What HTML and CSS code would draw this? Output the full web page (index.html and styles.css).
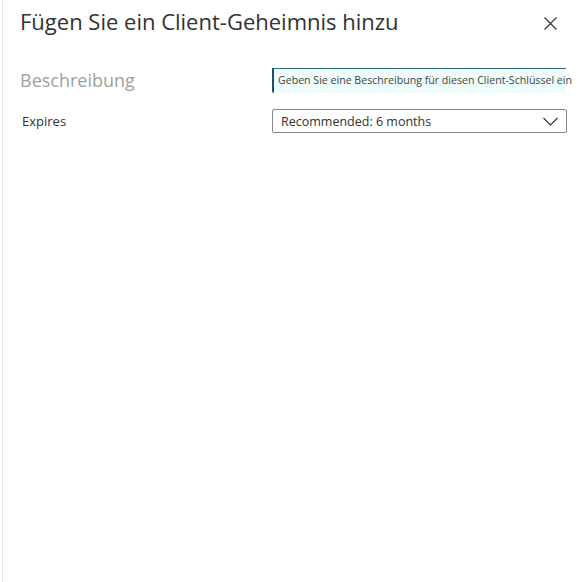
FILE: index.html
```html
<!DOCTYPE html>
<html lang="de">
<head>
<meta charset="utf-8">
<link rel="stylesheet" href="styles.css">
</head>
<body>
<div class="panel">
  <header class="head">
    <h1 class="title">Fügen Sie ein Client-Geheimnis hinzu</h1>
    <button class="close" aria-label="Schließen">
      <svg width="13" height="13" viewBox="0 0 13 13"><path d="M0.5 0.5 L12.5 12.5 M12.5 0.5 L0.5 12.5" stroke="#323130" stroke-width="1.1" fill="none"/></svg>
    </button>
  </header>
  <div class="form">
    <div class="row">
      <label class="label-big">Beschreibung</label>
      <div class="input">Geben Sie eine Beschreibung für diesen Client-Schlüssel ein</div>
    </div>
    <div class="row">
      <label class="label">Expires</label>
      <div class="select">
        <span>Recommended: 6 months</span>
        <svg width="15" height="9" viewBox="0 0 15 9"><path d="M0.5 1 L7.5 8 L14.5 1" stroke="#323130" stroke-width="1.1" fill="none"/></svg>
      </div>
    </div>
  </div>
</div>
</body>
</html>
```
FILE: styles.css
```css
html, body {
  margin: 0;
  padding: 0;
  background: #fff;
}
body {
  font-family: "Open Sans", "Noto Sans", sans-serif;
  color: #323130;
}
.panel {
  width: 585px;
  height: 582px;
  box-sizing: border-box;
  border-left: 1px solid #e6e6e6;
  margin-left: 2px;
  padding: 0 20px 0 17px;
}
.head {
  display: flex;
  align-items: flex-start;
  justify-content: space-between;
  padding-top: 5px;
}
.title {
  margin: 0;
  font-size: 22px;
  font-weight: 400;
  line-height: 32px;
  color: #323130;
}
.close {
  margin: 12px 10px 0 0;
  padding: 0;
  border: 0;
  background: none;
  width: 13px;
  height: 13px;
  display: flex;
}
.form {
  margin-top: 30px;
  display: flex;
  flex-direction: column;
  gap: 16px;
}
.row {
  display: flex;
  align-items: center;
}
.label-big {
  flex: 0 0 252px;
  font-size: 18px;
  color: #a19f9d;
  line-height: 26px;
}
.label {
  flex: 0 0 250px;
  padding-left: 2px;
  font-size: 13px;
  line-height: 18px;
}
.input {
  flex: 1;
  min-width: 0;
  height: 25px;
  box-sizing: border-box;
  background: #effcfc;
  border-top: 1px solid #2f6b7a;
  border-left: 2px solid #1f4f60;
  border-bottom-left-radius: 2px;
  margin-right: 1px;
  font-size: 10.6px;
  line-height: 23px;
  padding-left: 4px;
  white-space: nowrap;
  overflow: visible;
  color: #444;
}
.select {
  flex: 1;
  min-width: 0;
  height: 24px;
  box-sizing: border-box;
  border: 1px solid #8a8886;
  border-radius: 2px;
  display: flex;
  align-items: center;
  justify-content: space-between;
  padding: 0 8px 0 8px;
  font-size: 12.5px;
}
```
